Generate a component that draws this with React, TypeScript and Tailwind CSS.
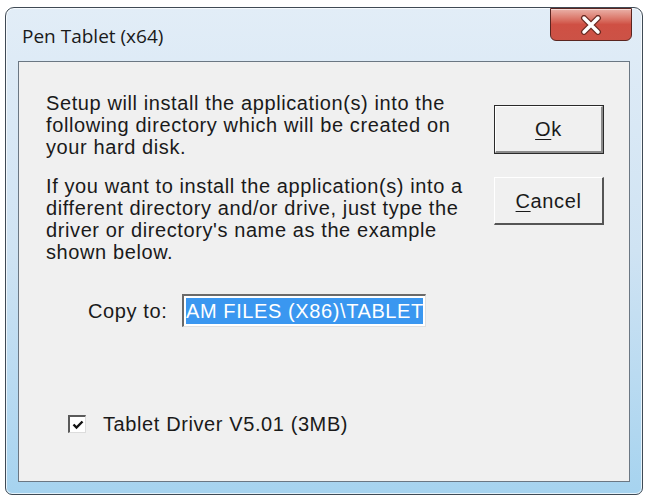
import React from "react";

function CloseButton() {
  return (
    <div className="absolute right-[10px] top-[0px] w-[82px] h-[33px] rounded-b-[6px] border border-[#5a2520] bg-gradient-to-b from-[#e9b1a8] via-[#cf5044] to-[#cc5246] flex items-center justify-center shadow-[inset_0_1px_0_rgba(255,255,255,0.5)]">
      <svg width="24" height="20" viewBox="0 0 24 20">
        <path d="M5 3 L19 17 M19 3 L5 17" stroke="#6b2a22" strokeWidth="6" strokeLinecap="round" />
        <path d="M5 3 L19 17 M19 3 L5 17" stroke="#ffffff" strokeWidth="3.5" strokeLinecap="round" />
      </svg>
    </div>
  );
}

function Underlined({ ch }: { ch: string }) {
  return <span className="underline underline-offset-[3px] decoration-1">{ch}</span>;
}

export default function App() {
  return (
    <div
      className="w-[648px] h-[498px] bg-white overflow-hidden pt-[7px] pl-[5px]"
      style={{ fontFamily: '"Liberation Sans", Arial, sans-serif' }}
    >
      <div className="relative w-[638px] h-[488px] rounded-t-[9px] rounded-b-[7px] border border-[#3f4a55] bg-gradient-to-b from-[#e2edf7] via-[#cfe3f3] to-[#a6d3ef] flex flex-col shadow-[inset_0_0_0_1px_rgba(255,255,255,0.7)]">
        <CloseButton />
        <div className="h-[53px] flex items-center pl-[16px] pt-[4px]">
          <span
            className="text-[19px] text-[#1a1a1a]"
            style={{ fontFamily: '"Open Sans", "Noto Sans", sans-serif' }}
          >
            Pen Tablet (x64)
          </span>
        </div>
        <div className="mx-[12px] h-[421px] border border-[#6b7783] bg-[#f0f0f0] flex text-[20px] tracking-[0.6px] text-[#1a1a1a] leading-[22px]">
          <div className="w-[458px] pl-[27px] pt-[30px] flex flex-col">
            <div className="whitespace-nowrap">
              Setup will install the application(s) into the
              <br />
              following directory which will be created on
              <br />
              your hard disk.
            </div>
            <div className="whitespace-nowrap mt-[17px]">
              If you want to install the application(s) into a
              <br />
              different directory and/or drive, just type the
              <br />
              driver or directory's name as the example
              <br />
              shown below.
            </div>
            <div className="flex items-center mt-[31px] pl-[42px]">
              <span className="w-[94px]">Copy to:</span>
              <div className="w-[244px] h-[33px] border-t-2 border-l-2 border-b border-r border-t-[#6a6a6a] border-l-[#6a6a6a] border-b-[#e0e0e0] border-r-[#e0e0e0] bg-white p-[2px] overflow-hidden">
                <div className="h-full bg-[#3a97f0] text-white whitespace-nowrap flex items-center overflow-hidden">
                  AM FILES (X86)\TABLET
                </div>
              </div>
            </div>
            <div className="flex items-center mt-[86px] pl-[22px]">
              <div className="w-[18px] h-[18px] border-t-2 border-l-2 border-b border-r border-t-[#5a5a5a] border-l-[#5a5a5a] border-b-[#dcdcdc] border-r-[#dcdcdc] bg-white flex items-center justify-center">
                <svg width="12" height="10" viewBox="0 0 12 10">
                  <path d="M1.5 4.5 L4.5 7.5 L10.5 1.5" stroke="#111" strokeWidth="2.4" fill="none" />
                </svg>
              </div>
              <span className="ml-[17px]">Tablet Driver V5.01 (3MB)</span>
            </div>
          </div>
          <div className="pl-[17px] pt-[43px] flex flex-col gap-[23px]">
            <div className="w-[110px] h-[49px] border border-[#2a2a2a] bg-[#f0f0f0] flex">
              <div className="flex-1 border-t border-l border-b-2 border-r-2 border-t-white border-l-white border-b-[#8a8a8a] border-r-[#8a8a8a] flex items-center justify-center">
                <span>
                  <Underlined ch="O" />k
                </span>
              </div>
            </div>
            <div className="w-[110px] h-[48px] border-t border-l border-b-2 border-r-2 border-t-white border-l-white border-b-[#555] border-r-[#555] bg-[#f0f0f0] flex items-center justify-center">
              <span>
                <Underlined ch="C" />ancel
              </span>
            </div>
          </div>
        </div>
      </div>
    </div>
  );
}
